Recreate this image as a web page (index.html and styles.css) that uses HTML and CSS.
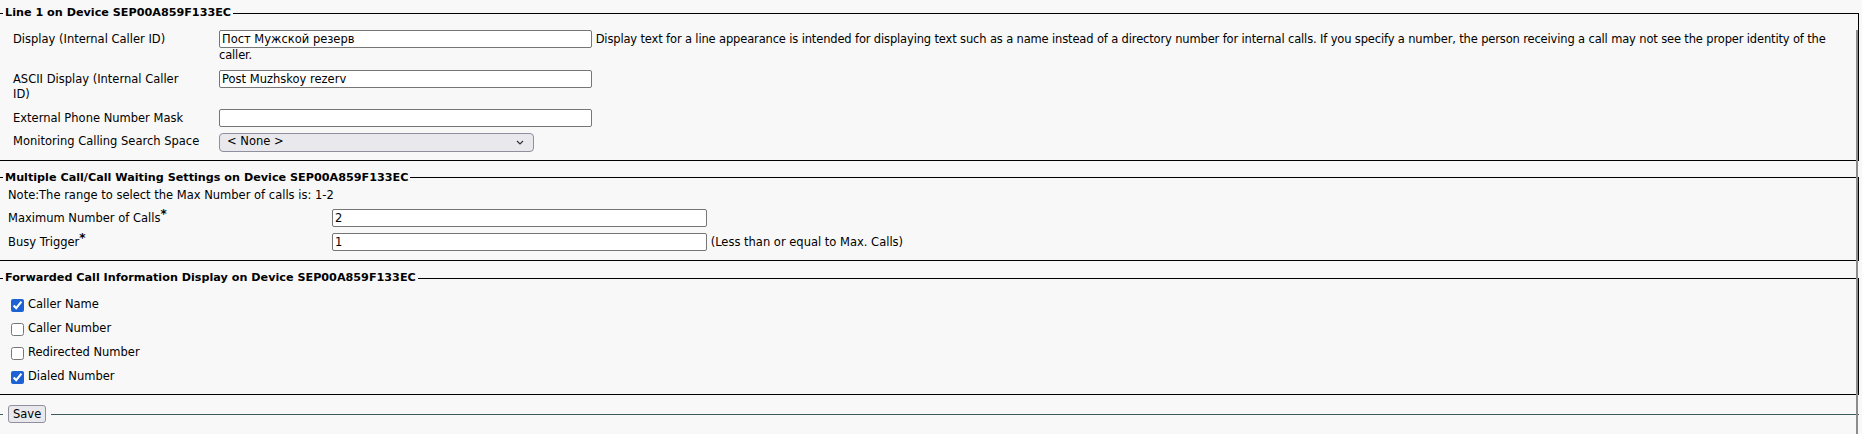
FILE: index.html
```html
<!DOCTYPE html>
<html lang="en">
<head>
  <meta charset="UTF-8">
  <title>Phone Line Configuration</title>
  <link rel="stylesheet" href="styles.css">
</head>
<body>

<form id="lineForm">

  <!-- Line settings -->
  <fieldset class="box">
    <legend>Line 1 on Device SEP00A859F133EC</legend>
    <table class="form form-line">
      <tr>
        <td class="lbl">Display (Internal Caller ID)</td>
        <td><input type="text" class="txt" value="Пост Мужской резерв"> <span class="hint">Display text for a line appearance is intended for displaying text such as a name instead of a directory number for internal calls. If you specify a number, the person receiving a call may not see the proper identity of the caller.</span></td>
      </tr>
      <tr>
        <td class="lbl">ASCII Display (Internal Caller<br>ID)</td>
        <td><input type="text" class="txt" value="Post Muzhskoy rezerv"></td>
      </tr>
      <tr>
        <td class="lbl">External Phone Number Mask</td>
        <td><input type="text" class="txt"></td>
      </tr>
      <tr>
        <td class="lbl">Monitoring Calling Search Space</td>
        <td>
          <span class="select-wrap">
            <select class="sel">
              <option selected>&lt; None &gt;</option>
            </select>
            <svg class="chevron" width="8" height="5" viewBox="0 0 8 5"><path d="M1 1 L4 4 L7 1" fill="none" stroke="#333" stroke-width="1.2"/></svg>
          </span>
        </td>
      </tr>
    </table>
  </fieldset>

  <!-- Multiple call settings -->
  <fieldset class="box box-calls">
    <legend>Multiple Call/Call Waiting Settings on Device SEP00A859F133EC</legend>
    <table class="form form-calls">
      <tr>
        <td colspan="2">Note:The range to select the Max Number of calls is: 1-2</td>
      </tr>
      <tr>
        <td class="lbl">Maximum Number of Calls<sup class="req">*</sup></td>
        <td><input type="text" class="txt txt-wide" value="2"></td>
      </tr>
      <tr>
        <td class="lbl">Busy Trigger<sup class="req">*</sup></td>
        <td><input type="text" class="txt txt-wide" value="1"> (Less than or equal to Max. Calls)</td>
      </tr>
    </table>
  </fieldset>

  <!-- Forwarded call info -->
  <fieldset class="box">
    <legend>Forwarded Call Information Display on Device SEP00A859F133EC</legend>
    <div class="checks">
      <label class="opt"><input type="checkbox" checked>Caller Name</label>
      <label class="opt"><input type="checkbox">Caller Number</label>
      <label class="opt"><input type="checkbox">Redirected Number</label>
      <label class="opt"><input type="checkbox" checked>Dialed Number</label>
    </div>
  </fieldset>

  <fieldset class="actions">
    <legend><button type="submit" class="btn">Save</button></legend>
  </fieldset>

</form>

<div class="edge"></div>

</body>
</html>
```

FILE: styles.css
```css
body {
  margin: 0;
  padding-top: 6px;
  background: #f8f8f8;
  color: #000;
  font-family: "DejaVu Sans", Verdana, sans-serif;
  font-size: 11.5px;
  line-height: 15.5px;
}

.box {
  margin: 0 3px 10px 0;
  padding: 0 0 5px 0;
  border: 1px solid #000;
  border-left: 0;
  min-width: 0;
}

.box-calls {
  padding-bottom: 6px;
}

.box legend {
  margin-left: 3px;
  padding: 0 2px;
  font-size: 11.2px;
  font-weight: bold;
  line-height: 14px;
}

.form {
  border-collapse: collapse;
}

.form td {
  padding: 3px 2px;
  vertical-align: baseline;
}

.form-line {
  margin: 7px 0 0 11px;
  width: calc(100% - 32px);
}

.form-line .lbl {
  width: 190px;
  padding-right: 14px;
  white-space: nowrap;
}

.hint {
  letter-spacing: -0.15px;
}

.form-calls {
  margin: 0 0 0 6px;
}

.form-calls .lbl {
  width: 320px;
}

.txt {
  width: 373px;
  height: 18px;
  box-sizing: border-box;
  margin: 0;
  padding: 0 2px;
  border: 1px solid #767676;
  border-radius: 2px;
  background: #fff;
  font: inherit;
  color: #000;
}

.txt-wide {
  width: 375px;
}

.select-wrap {
  position: relative;
  display: inline-block;
}

.sel {
  width: 315px;
  height: 19px;
  margin: 0;
  padding: 0 7px;
  border: 1px solid #8f8f9d;
  border-radius: 4px;
  background: #e9e9ed;
  font: inherit;
  color: #000;
  appearance: none;
}

.chevron {
  position: absolute;
  right: 10px;
  top: 7px;
  pointer-events: none;
}

.req {
  font-size: 12px;
  font-weight: bold;
  line-height: 0;
  vertical-align: 4px;
}

.checks {
  padding: 8px 0 0 7px;
}

.opt {
  display: flex;
  align-items: center;
  height: 24px;
}

.opt input {
  width: 13px;
  height: 13px;
  margin: 0 4px;
  accent-color: #1c62d4;
}

.actions {
  margin: 0 3px 0 0;
  padding: 0;
  border: 0;
  border-top: 1px solid #3d5b5b;
}

.actions legend {
  margin-left: 3px;
  padding: 0 5px;
}

.btn {
  height: 18px;
  padding: 0 4px;
  border: 1px solid #8f8f9d;
  border-radius: 3px;
  background: #e9e9ed;
  font: inherit;
  line-height: 14px;
  color: #000;
  cursor: pointer;
}

.edge {
  position: fixed;
  top: 30px;
  bottom: 0;
  right: 4px;
  width: 2px;
  background: #8c8c8c;
}
```
